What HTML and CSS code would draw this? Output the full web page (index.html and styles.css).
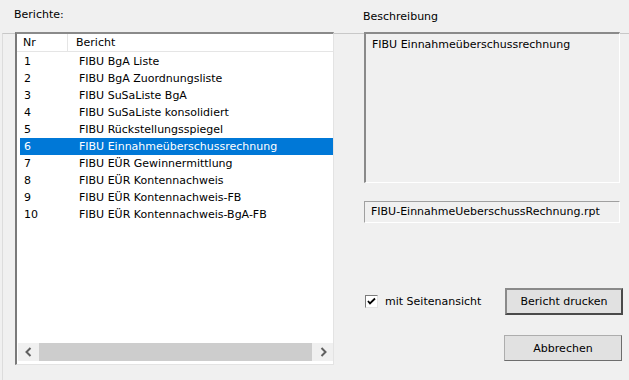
FILE: index.html
```html
<!DOCTYPE html>
<html lang="de">
<head>
    <meta charset="UTF-8">
    <title>Berichte</title>
    <link rel="stylesheet" href="styles.css">
</head>
<body>
    <div class="dialog">
        <div class="labels">
            <div class="label-left">Berichte:</div>
            <div class="label-right">Beschreibung</div>
        </div>
        <div class="frame">
            <!-- Liste der Berichte -->
            <div class="listbox">
                <div class="list-head">
                    <div class="col-nr">Nr</div>
                    <div class="col-name">Bericht</div>
                </div>
                <div class="list-body">
                    <div class="row"><span class="nr">1</span><span class="name">FIBU BgA Liste</span></div>
                    <div class="row"><span class="nr">2</span><span class="name">FIBU BgA Zuordnungsliste</span></div>
                    <div class="row"><span class="nr">3</span><span class="name">FIBU SuSaListe BgA</span></div>
                    <div class="row"><span class="nr">4</span><span class="name">FIBU SuSaListe konsolidiert</span></div>
                    <div class="row"><span class="nr">5</span><span class="name">FIBU Rückstellungsspiegel</span></div>
                    <div class="row selected"><span class="nr">6</span><span class="name">FIBU Einnahmeüberschussrechnung</span></div>
                    <div class="row"><span class="nr">7</span><span class="name">FIBU EÜR Gewinnermittlung</span></div>
                    <div class="row"><span class="nr">8</span><span class="name">FIBU EÜR Kontennachweis</span></div>
                    <div class="row"><span class="nr">9</span><span class="name">FIBU EÜR Kontennachweis-FB</span></div>
                    <div class="row"><span class="nr">10</span><span class="name">FIBU EÜR Kontennachweis-BgA-FB</span></div>
                </div>
                <div class="hscroll">
                    <div class="arrow">
                        <svg width="9" height="10" viewBox="0 0 9 10"><polyline points="6.5,1 2.5,5 6.5,9" fill="none" stroke="#606060" stroke-width="2"/></svg>
                    </div>
                    <div class="thumb"></div>
                    <div class="arrow">
                        <svg width="9" height="10" viewBox="0 0 9 10"><polyline points="2.5,1 6.5,5 2.5,9" fill="none" stroke="#606060" stroke-width="2"/></svg>
                    </div>
                </div>
            </div>

            <!-- Beschreibung und Aktionen -->
            <div class="side">
                <div class="desc">FIBU Einnahmeüberschussrechnung</div>
                <div class="file">FIBU-EinnahmeUeberschussRechnung.rpt</div>
                <div class="actions">
                    <label class="check">
                        <span class="box">
                            <svg width="9" height="9" viewBox="0 0 9 9"><polyline points="1,4 3,6.5 8,1.5" fill="none" stroke="#000" stroke-width="1.8"/></svg>
                        </span>
                        mit Seitenansicht
                    </label>
                    <button class="btn default">Bericht drucken</button>
                </div>
                <div class="actions end">
                    <button class="btn">Abbrechen</button>
                </div>
            </div>
        </div>
    </div>
</body>
</html>
```

FILE: styles.css
```css
/* Grundlayout */
body {
    margin: 0;
    background-color: #f0f0f0;
    font-family: "DejaVu Sans", Tahoma, sans-serif;
    font-size: 11px;
    color: #000;
}

.dialog {
    width: 629px;
    height: 380px;
    overflow: hidden;
}

.labels {
    display: flex;
    height: 33px;
}

.label-left {
    width: 349px;
    padding-left: 14px;
    padding-top: 8px;
}

.label-right {
    padding-top: 10px;
}

.frame {
    display: flex;
    margin-left: 2px;
    padding-left: 12px;
    border-top: 1px solid #c8c8c8;
    border-left: 1px solid #dcdcdc;
    height: 346px;
}

/* Liste */
.listbox {
    width: 316px;
    height: 330px;
    margin-top: -2px;
    background-color: #fff;
    border-top: 2px solid #8a8a8a;
    border-left: 2px solid #7a7a7a;
    border-right: 1px solid #e3e3e3;
    border-bottom: 1px solid #e3e3e3;
    display: flex;
    flex-direction: column;
}

.list-head {
    display: flex;
    height: 17px;
    line-height: 17px;
    border-bottom: 1px solid #e5e5e5;
}

.col-nr {
    width: 51px;
    padding-left: 6px;
    box-sizing: border-box;
    border-right: 1px solid #e5e5e5;
}

.col-name {
    padding-left: 8px;
}

.list-body {
    flex: 1;
    padding-top: 1px;
}

.row {
    display: flex;
    height: 17px;
    line-height: 17px;
    margin-left: 3px;
}

.row .nr {
    width: 59px;
    padding-left: 4px;
    box-sizing: border-box;
}

.row.selected {
    background-color: #0078d7;
    color: #fff;
}

.hscroll {
    display: flex;
    height: 18px;
    margin-left: 1px;
    margin-bottom: 3px;
    background-color: #f0f0f0;
}

.arrow {
    width: 20px;
    display: flex;
    align-items: center;
    justify-content: center;
}

.thumb {
    flex: 1;
    margin: 0 1px;
    background-color: #cdcdcd;
}

/* Rechte Seite */
.side {
    margin-left: 30px;
    width: 259px;
    display: flex;
    flex-direction: column;
}

.desc {
    width: 256px;
    height: 151px;
    margin-top: -2px;
    box-sizing: border-box;
    padding: 4px 6px;
    border-top: 2px solid #8a8a8a;
    border-left: 2px solid #8a8a8a;
    border-right: 1px solid #fff;
    border-bottom: 1px solid #fff;
}

.file {
    width: 256px;
    height: 22px;
    margin-top: 18px;
    box-sizing: border-box;
    padding: 0 6px;
    line-height: 19px;
    border-top: 1px solid #a0a0a0;
    border-left: 1px solid #a0a0a0;
    border-right: 1px solid #fff;
    border-bottom: 1px solid #fff;
}

.actions {
    display: flex;
    align-items: center;
    justify-content: space-between;
    margin-top: 65px;
}

.actions.end {
    justify-content: flex-end;
    margin-top: 20px;
}

.check {
    display: flex;
    align-items: center;
    gap: 7px;
    margin-left: 1px;
}

.box {
    width: 11px;
    height: 11px;
    background-color: #fff;
    border-top: 1px solid #7a7a7a;
    border-left: 1px solid #7a7a7a;
    border-right: 1px solid #e3e3e3;
    border-bottom: 1px solid #e3e3e3;
    display: flex;
    align-items: center;
    justify-content: center;
}

.btn {
    width: 118px;
    height: 26px;
    font-family: inherit;
    font-size: 11px;
    background-color: #e1e1e1;
    border: 1px solid #adadad;
    border-right-color: #6d6d6d;
    border-bottom-color: #6d6d6d;
    margin-right: 1px;
    padding: 0;
}

.btn.default {
    height: 27px;
    border: 2px solid #4a4a4a;
    border-top-color: #8a8a8a;
    border-left-color: #8a8a8a;
    margin-right: 0;
}
```
